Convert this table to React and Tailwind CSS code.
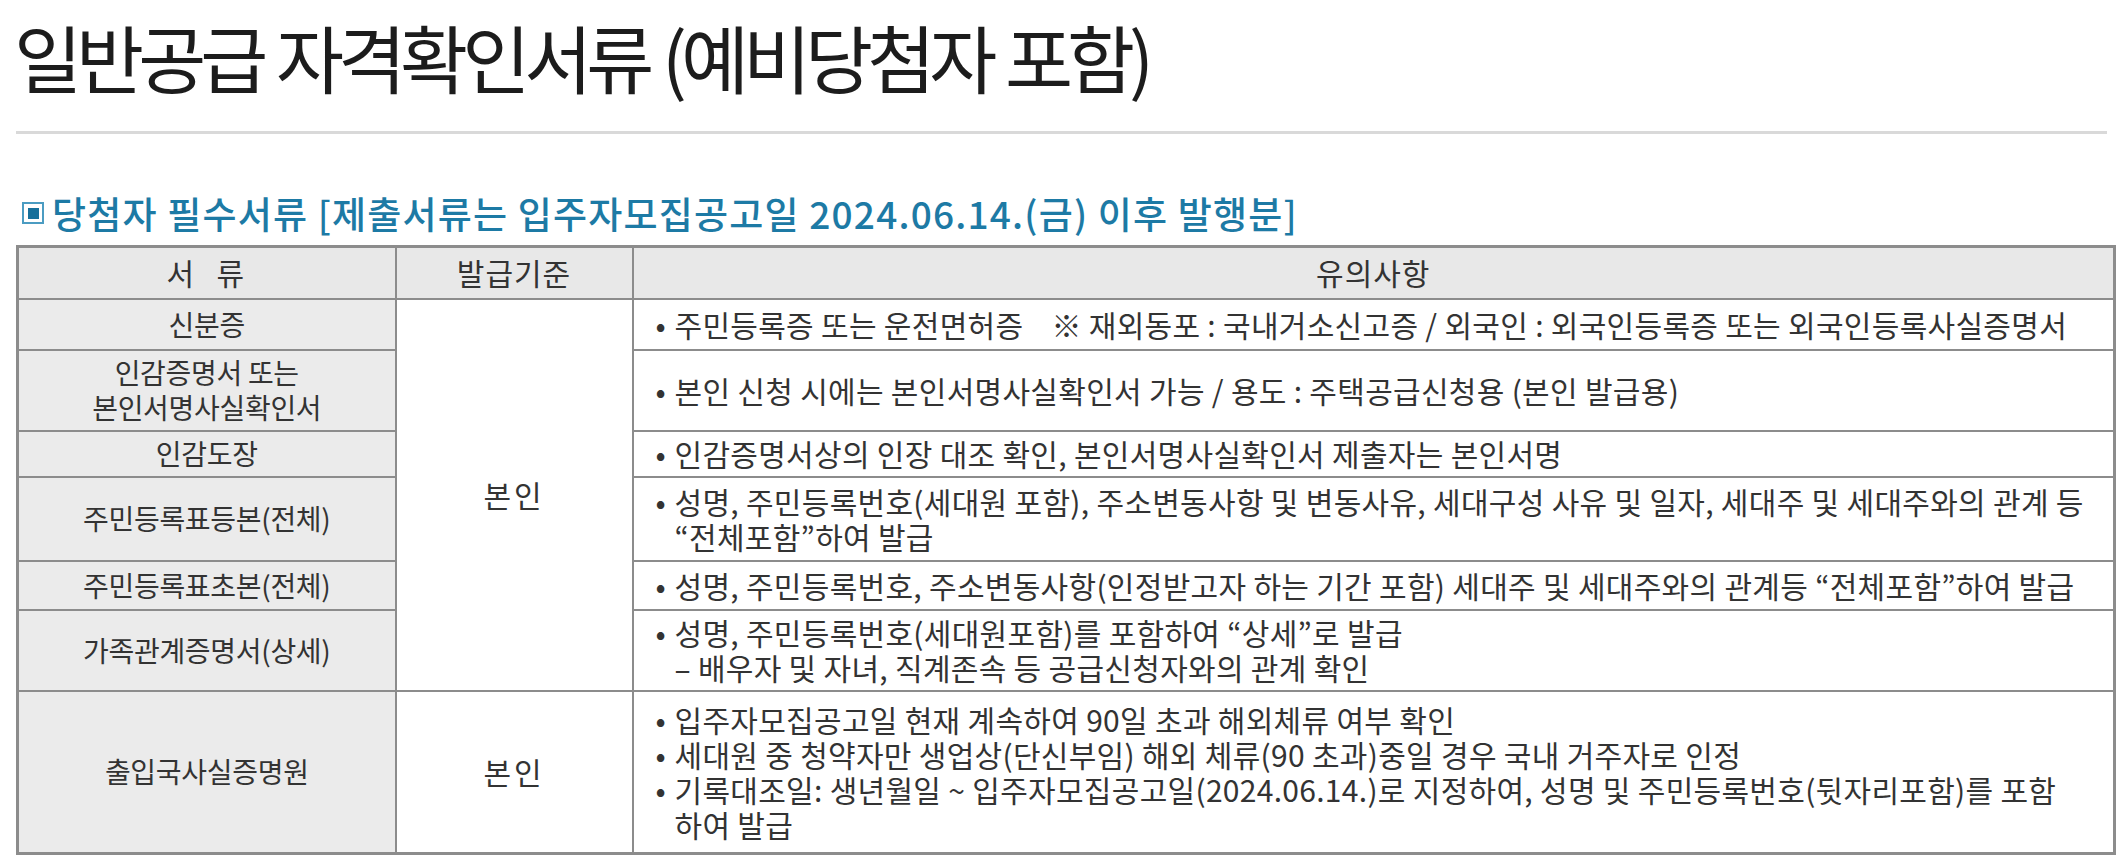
import React from 'react'

function Bullet({ children }) {
  return (
    <div className="flex">
      <span className="w-[19px] shrink-0">•</span>
      <span className="whitespace-nowrap">{children}</span>
    </div>
  )
}

const cellBase = "border-2 border-[#8c8c8c] align-middle"
const leftCell = cellBase + " bg-[#ebebeb] text-center text-[28px] tracking-[-0.3px]"
const midCell = cellBase + " bg-white text-center tracking-[3px]"
const noteCell = cellBase + " bg-white text-left pl-[22px] tracking-[0.3px]"

export default function App() {
  return (
    <div className="w-[2123px] h-[862px] overflow-hidden bg-white font-['Noto_Sans_CJK_KR',sans-serif] text-[#333]">
      <div className="h-[131px] pl-[14px] pt-[16px]">
        <h1 className="text-[74px] leading-[80px] tracking-[-6px] [word-spacing:3px] text-[#1c1c1c] font-normal whitespace-nowrap">
          일반공급 자격확인서류 (예비당첨자 포함)
        </h1>
      </div>
      <div className="mx-[16px] h-[3px] bg-[#d9d9d9]" />

      <div className="mt-[59px] mb-[12px] h-[40px] pl-[22px] flex items-center gap-[8px] text-[#1d7aa5]">
        <div className="w-[22px] h-[22px] border-2 border-[#4b9cc2] flex items-center justify-center">
          <div className="w-[11px] h-[11px] bg-[#16709b]" />
        </div>
        <h2 className="text-[37px] leading-[40px] font-medium tracking-[1.2px] whitespace-nowrap">
          당첨자 필수서류 [제출서류는 입주자모집공고일 2024.06.14.(금) 이후 발행분]
        </h2>
      </div>

      <table className="ml-[16px] w-[2100px] table-fixed border-collapse border-[3px] border-[#8c8c8c] text-[30px] leading-[35px]">
        <colgroup>
          <col className="w-[378px]" />
          <col className="w-[237px]" />
          <col />
        </colgroup>
        <thead>
          <tr className="h-[52px] bg-[#e8e8e8]">
            <th className={cellBase + " font-normal tracking-[3px]"}>서&nbsp;&nbsp;류</th>
            <th className={cellBase + " font-normal tracking-[1px]"}>발급기준</th>
            <th className={cellBase + " font-normal tracking-[1px]"}>유의사항</th>
          </tr>
        </thead>
        <tbody>
          <tr className="h-[51px]">
            <td className={leftCell}>신분증</td>
            <td rowSpan={6} className={midCell}>본인</td>
            <td className={noteCell}>
              <Bullet>주민등록증 또는 운전면허증&nbsp;&nbsp;&nbsp;&nbsp;※ 재외동포 : 국내거소신고증 / 외국인 : 외국인등록증 또는 외국인등록사실증명서</Bullet>
            </td>
          </tr>
          <tr className="h-[81px]">
            <td className={leftCell}>인감증명서 또는<br />본인서명사실확인서</td>
            <td className={noteCell}>
              <Bullet>본인 신청 시에는 본인서명사실확인서 가능 / 용도 : 주택공급신청용 (본인 발급용)</Bullet>
            </td>
          </tr>
          <tr className="h-[46px]">
            <td className={leftCell}>인감도장</td>
            <td className={noteCell}>
              <Bullet>인감증명서상의 인장 대조 확인, 본인서명사실확인서 제출자는 본인서명</Bullet>
            </td>
          </tr>
          <tr className="h-[84px]">
            <td className={leftCell}>주민등록표등본(전체)</td>
            <td className={noteCell}>
              <Bullet>
                성명, 주민등록번호(세대원 포함), 주소변동사항 및 변동사유, 세대구성 사유 및 일자, 세대주 및 세대주와의 관계 등
                <br />“전체포함”하여 발급
              </Bullet>
            </td>
          </tr>
          <tr className="h-[49px]">
            <td className={leftCell}>주민등록표초본(전체)</td>
            <td className={noteCell}>
              <Bullet>성명, 주민등록번호, 주소변동사항(인정받고자 하는 기간 포함) 세대주 및 세대주와의 관계등 “전체포함”하여 발급</Bullet>
            </td>
          </tr>
          <tr className="h-[81px]">
            <td className={leftCell}>가족관계증명서(상세)</td>
            <td className={noteCell}>
              <Bullet>
                성명, 주민등록번호(세대원포함)를 포함하여 “상세”로 발급
                <br />– 배우자 및 자녀, 직계존속 등 공급신청자와의 관계 확인
              </Bullet>
            </td>
          </tr>
          <tr className="h-[163px]">
            <td className={leftCell}>출입국사실증명원</td>
            <td className={midCell}>본인</td>
            <td className={noteCell}>
              <Bullet>입주자모집공고일 현재 계속하여 90일 초과 해외체류 여부 확인</Bullet>
              <Bullet>세대원 중 청약자만 생업상(단신부임) 해외 체류(90 초과)중일 경우 국내 거주자로 인정</Bullet>
              <Bullet>
                기록대조일: 생년월일 ~ 입주자모집공고일(2024.06.14.)로 지정하여, 성명 및 주민등록번호(뒷자리포함)를 포함
                <br />하여 발급
              </Bullet>
            </td>
          </tr>
        </tbody>
      </table>
    </div>
  )
}
